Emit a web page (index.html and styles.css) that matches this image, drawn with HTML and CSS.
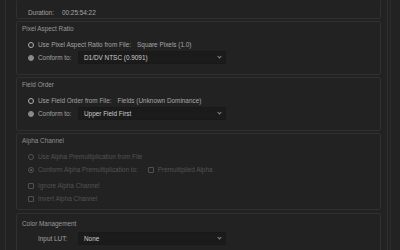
FILE: index.html
```html
<!DOCTYPE html>
<html lang="en">

<head>
    <meta charset="UTF-8">
    <meta name="viewport" content="width=device-width, initial-scale=1.0">
    <title>Interpret Footage</title>
    <link rel="stylesheet" href="styles.css">
</head>

<body>
    <div class="panel">
        <div class="sections">
            <!-- Duración (la caja sigue por encima) -->
            <div class="section section-top">
                <div class="duration">
                    <span class="label">Duration:</span>
                    <span class="value">00:25:54:22</span>
                </div>
            </div>

            <div class="section">
                <div class="title">Pixel Aspect Ratio</div>
                <div class="row">
                    <span class="radio"></span>
                    <span class="label">Use Pixel Aspect Ratio from File:</span>
                    <span class="value">Square Pixels (1.0)</span>
                </div>
                <div class="row">
                    <span class="radio checked"></span>
                    <span class="label fixed">Conform to:</span>
                    <div class="select">D1/DV NTSC (0.9091)<span class="chev"></span></div>
                </div>
            </div>

            <div class="section">
                <div class="title">Field Order</div>
                <div class="row">
                    <span class="radio"></span>
                    <span class="label">Use Field Order from File:</span>
                    <span class="value">Fields (Unknown Dominance)</span>
                </div>
                <div class="row">
                    <span class="radio checked"></span>
                    <span class="label fixed">Conform to:</span>
                    <div class="select">Upper Field First<span class="chev"></span></div>
                </div>
            </div>

            <div class="section disabled section-alpha">
                <div class="title">Alpha Channel</div>
                <div class="row">
                    <span class="radio"></span>
                    <span class="label">Use Alpha Premultiplication from File</span>
                </div>
                <div class="row">
                    <span class="radio dot"></span>
                    <span class="label">Conform Alpha Premultiplication to:</span>
                    <span class="check"></span>
                    <span class="label">Premultiplied Alpha</span>
                </div>
                <div class="row spaced">
                    <span class="check"></span>
                    <span class="label">Ignore Alpha Channel</span>
                </div>
                <div class="row">
                    <span class="check"></span>
                    <span class="label">Invert Alpha Channel</span>
                </div>
            </div>

            <div class="section section-color">
                <div class="title">Color Management</div>
                <div class="row">
                    <span class="label lut">Input LUT:</span>
                    <div class="select">None<span class="chev"></span></div>
                </div>
            </div>
        </div>
        <div class="track"></div>
    </div>
</body>

</html>
```

FILE: styles.css
```css
body {
    font-family: 'Liberation Sans', Arial, sans-serif;
    font-size: 6.4px;
    background-color: #222222;
    color: #9a9a9a;
    margin: 0;
    padding: 0;
    height: 250px;
    overflow: hidden;
}

.panel {
    display: flex;
    margin-left: 5px;
    border-left: 1px solid #2e2e2e;
    padding-left: 10px;
    height: 250px;
}

.sections {
    width: 365px;
    display: flex;
    flex-direction: column;
    gap: 2px;
}

.track {
    width: 2px;
    margin-left: 6px;
    border-left: 1px solid #303030;
    border-right: 1px solid #2c2c2c;
}

.section {
    border: 1px solid #303030;
    border-radius: 2px;
    padding: 0 0 10px 11px;
    flex-shrink: 0;
}

.section-top {
    border-top: none;
    padding: 7px 0 0 11px;
    height: 11px;
}

.duration {
    display: flex;
    line-height: 11px;
}

.duration .value {
    margin-left: 8px;
}

.title {
    height: 13px;
    line-height: 13px;
    margin-left: -6px;
    margin-bottom: 3px;
    color: #999999;
}

.row {
    display: flex;
    align-items: center;
    height: 13px;
}

.label {
    color: #a2a2a2;
    white-space: nowrap;
}

.fixed {
    width: 40px;
}

.lut {
    width: 30px;
    margin-left: 10px;
    margin-right: 10px;
}

.value {
    margin-left: 6px;
    color: #a8a8a8;
}

.radio {
    width: 4px;
    height: 4px;
    border: 1px solid #b0b0b0;
    border-radius: 50%;
    margin-right: 4px;
    flex-shrink: 0;
}

.radio.checked {
    background-color: #8a8a8a;
    border-color: #8a8a8a;
}

.select {
    position: relative;
    width: 141px;
    height: 11px;
    line-height: 11px;
    padding-left: 5px;
    background-color: #1b1b1b;
    border: 1px solid #191919;
    border-radius: 1px;
    color: #cccccc;
}

.chev {
    position: absolute;
    right: 4px;
    top: 3px;
    width: 2px;
    height: 2px;
    border-right: 1px solid #8a8a8a;
    border-bottom: 1px solid #8a8a8a;
    transform: rotate(45deg);
}

.disabled .title {
    color: #8e8e8e;
}

.disabled .label {
    color: #525252;
}

.disabled .radio {
    border-color: #525252;
}

.radio.dot {
    background: radial-gradient(circle, #525252 0 1px, transparent 1.2px);
}

.check {
    width: 4px;
    height: 4px;
    border: 1px solid #525252;
    border-radius: 1px;
    margin-right: 4px;
    flex-shrink: 0;
}

.row .label + .check {
    margin-left: 10px;
}

.spaced {
    margin-top: 3px;
}

.section-alpha {
    padding-bottom: 4px;
}

.section-color {
    margin-top: 1px;
}

.section-color .title {
    height: 17px;
    line-height: 19px;
    margin-bottom: 1px;
}
```
